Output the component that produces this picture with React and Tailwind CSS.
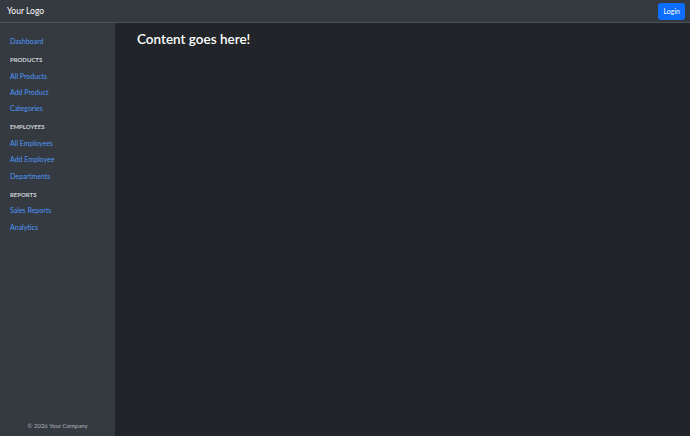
import React from "react";

const sections = [
  { title: "PRODUCTS", links: ["All Products", "Add Product", "Categories"] },
  { title: "EMPLOYEES", links: ["All Employees", "Add Employee", "Departments"] },
  { title: "REPORTS", links: ["Sales Reports", "Analytics"] },
];

const App = () => {
  return (
    <div className="h-[436px] w-[690px] flex flex-col bg-[#212529] font-['Lato',sans-serif]">
      {/* Header */}
      <header className="h-[23px] shrink-0 flex items-center justify-between pl-[7px] pr-[5px] bg-[#343a40] border-b border-[#4b5157]">
        <span className="text-[8.5px] text-white">Your Logo</span>
        <button className="h-[17px] px-[5px] rounded-[3px] bg-[#0d6efd] text-white text-[7px]">Login</button>
      </header>

      <div className="flex flex-1 min-h-0">
        {/* Sidebar */}
        <aside className="w-[115px] shrink-0 bg-[#343a40] flex flex-col justify-between pl-[10px] pt-[13px] pb-[6px]">
          <nav className="flex flex-col text-[7px]">
            <a className="h-[10px] flex items-center text-[#5097f8]">Dashboard</a>
            {sections.map((s) => (
              <div key={s.title} className="flex flex-col">
                <div className="mt-[8.5px] h-[10px] flex items-center text-[6px] font-bold text-[#ced4da]">{s.title}</div>
                {s.links.map((l) => (
                  <a key={l} className="mt-[6.3px] h-[10px] flex items-center text-[#5097f8]">
                    {l}
                  </a>
                ))}
              </div>
            ))}
          </nav>
          <div className="-ml-[10px] text-center text-[6px] text-[#adb5bd]">© 2026 Your Company</div>
        </aside>

        {/* Main */}
        <main className="flex-1 pl-[22px] pt-[6px]">
          <h1 className="text-[13.5px] font-semibold text-white">Content goes here!</h1>
        </main>
      </div>
    </div>
  );
};

export default App;
